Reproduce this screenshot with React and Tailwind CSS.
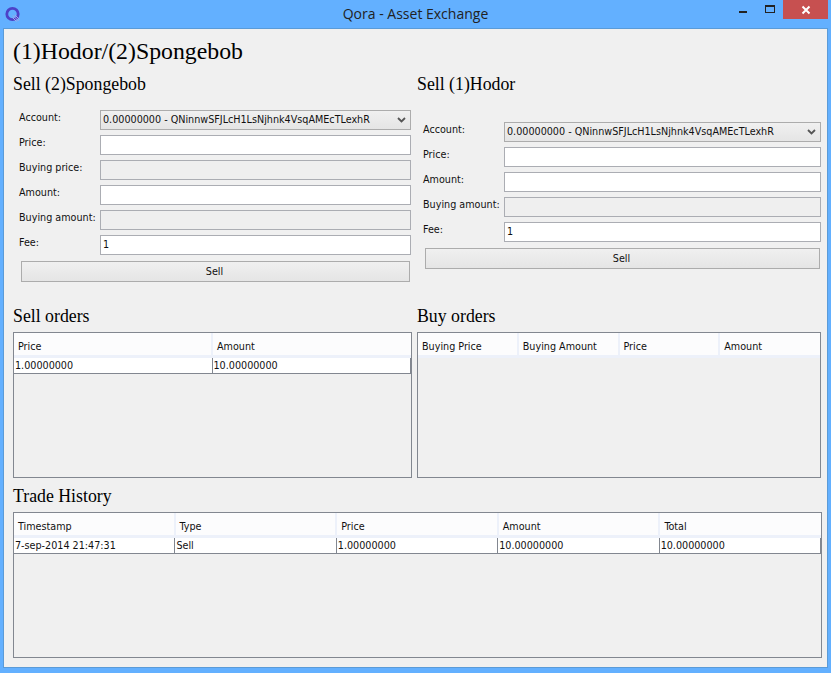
import React from 'react';

const ui = "font-['DejaVu_Sans_Condensed','Noto_Sans',sans-serif] text-[10.7px] text-[#111]";
const heading = "font-['Liberation_Serif',serif] text-[17.8px] leading-[20px] text-black";

function Logo() {
  return (
    <svg width="18" height="18" viewBox="0 0 18 18" fill="none">
      <circle cx="8.5" cy="8" r="5.7" stroke="#4d42c8" strokeWidth="2.8" />
      <path d="M9 9.5l5.5 5.5M11 9l4.5 4.5M8.5 11.5l4 4" stroke="#a7a4ea" strokeWidth="1" />
    </svg>
  );
}

function TitleBar() {
  return (
    <div className="flex h-[28px] shrink-0 items-start">
      <div className="flex w-[250px] pl-[4px] pt-[6px]">
        <Logo />
      </div>
      <div className="flex-1 pt-[4px] text-center font-['Open_Sans',sans-serif] text-[14px] leading-[20px] text-[#222]">
        Qora - Asset Exchange
      </div>
      <div className="flex w-[250px] justify-end pr-[3px]">
        <div className="flex h-[19px] w-[9px] items-start pt-[11px]">
          <div className="h-[2px] w-[8px] bg-[#222]" />
        </div>
        <div className="ml-[17px] mr-[8px] flex h-[19px] w-[10px] items-start pt-[5px]">
          <div className="h-[8px] w-[10px] border border-t-2 border-[#222]" />
        </div>
        <div className="flex h-[19px] w-[45px] items-center justify-center bg-[#c75050]">
          <svg width="10" height="10" viewBox="0 0 10 10">
            <path d="M1.5 1.5l7 7M8.5 1.5l-7 7" stroke="#fff" strokeWidth="2" />
          </svg>
        </div>
      </div>
    </div>
  );
}

function Row({ label, value, kind }) {
  return (
    <div className="flex h-[20px] items-start">
      <div className="w-[87px] shrink-0 whitespace-nowrap pl-[6px] pt-[1px] leading-[14px]">{label}</div>
      {kind === 'select' ? (
        <div className="flex h-[20px] flex-1 items-center border border-[#acacac] bg-gradient-to-b from-[#f0f0f0] to-[#e5e5e5] pl-[2px] pr-[4px]">
          <span className="flex-1 truncate">{value}</span>
          <svg width="9" height="6" viewBox="0 0 9 6">
            <path d="M1 1l3.5 3.5L8 1" fill="none" stroke="#555" strokeWidth="1.8" />
          </svg>
        </div>
      ) : (
        <div className={`flex h-[20px] flex-1 items-center border border-[#abadb3] pl-[2px] ${kind === 'off' ? 'bg-[#efefef]' : 'bg-white'}`}>
          {value}
        </div>
      )}
    </div>
  );
}

function SellForm({ title, rows, top }) {
  return (
    <div className="flex flex-col">
      <div className={heading}>{title}</div>
      <div className={`flex flex-col gap-[5px] ${top}`}>
        {rows.map(r => (
          <Row key={r.label} {...r} />
        ))}
      </div>
      <button className="ml-[8px] mr-[1px] mt-[6px] h-[21px] border border-[#acacac] bg-gradient-to-b from-[#f0f0f0] to-[#e5e5e5] pr-[2px] pt-[2px]">
        Sell
      </button>
    </div>
  );
}

function Table({ cols, row, className = '' }) {
  return (
    <div className={`border border-[#828790] bg-[#f0f0f0] ${className}`}>
      <div className="flex h-[25px] border-b-[3px] border-[#edf1fa] bg-[#fcfcfd] pr-[1px]">
        {cols.map((c, i) => (
          <div key={c} className={`flex-1 pl-[4px] pt-[4px] leading-[20px] ${i < cols.length - 1 ? 'border-r-2 border-[#edf1fa]' : ''}`}>
            {c}
          </div>
        ))}
      </div>
      {row && (
        <div className="flex h-[16px] border-b border-[#828790] bg-white">
          {row.map((c, i) => (
            <div key={i} className="flex-1 border-r border-[#828790] pl-[1px] leading-[15px]">
              {c}
            </div>
          ))}
        </div>
      )}
    </div>
  );
}

const account = '0.00000000 - QNinnwSFJLcH1LsNjhnk4VsqAMEcTLexhR';

export default function App() {
  return (
    <div className={`flex h-[673px] w-[831px] flex-col bg-[#63b0ff] ${ui}`}>
      <TitleBar />
      <div className="mx-[3px] mb-[5px] flex flex-1 flex-col border border-[#5a9bd8] bg-[#f0f0f0] pl-[9px] pr-[5px]">
        <div className="pt-[8px] font-['Liberation_Serif',serif] text-[23.8px] leading-[28px] text-black">(1)Hodor/(2)Spongebob</div>
        <div className="mt-[9px] grid grid-cols-[398px_404px] gap-x-[6px]">
          <SellForm
            title="Sell (2)Spongebob"
            top="mt-[16px]"
            rows={[
              { label: 'Account:', value: account, kind: 'select' },
              { label: 'Price:' },
              { label: 'Buying price:', kind: 'off' },
              { label: 'Amount:' },
              { label: 'Buying amount:', kind: 'off' },
              { label: 'Fee:', value: '1' },
            ]}
          />
          <SellForm
            title="Sell (1)Hodor"
            top="mt-[28px]"
            rows={[
              { label: 'Account:', value: account, kind: 'select' },
              { label: 'Price:' },
              { label: 'Amount:' },
              { label: 'Buying amount:', kind: 'off' },
              { label: 'Fee:', value: '1' },
            ]}
          />
        </div>
        <div className="mt-[24px] grid grid-cols-[399px_404px] gap-x-[5px]">
          <div>
            <div className={heading}>Sell orders</div>
            <Table className="mt-[6px] h-[146px]" cols={['Price', 'Amount']} row={['1.00000000', '10.00000000']} />
          </div>
          <div>
            <div className={heading}>Buy orders</div>
            <Table className="mt-[6px] h-[146px]" cols={['Buying Price', 'Buying Amount', 'Price', 'Amount']} />
          </div>
        </div>
        <div className={`mt-[8px] ${heading}`}>Trade History</div>
        <Table
          className="mt-[6px] h-[146px] w-[809px]"
          cols={['Timestamp', 'Type', 'Price', 'Amount', 'Total']}
          row={['7-sep-2014 21:47:31', 'Sell', '1.00000000', '10.00000000', '10.00000000']}
        />
      </div>
    </div>
  );
}
